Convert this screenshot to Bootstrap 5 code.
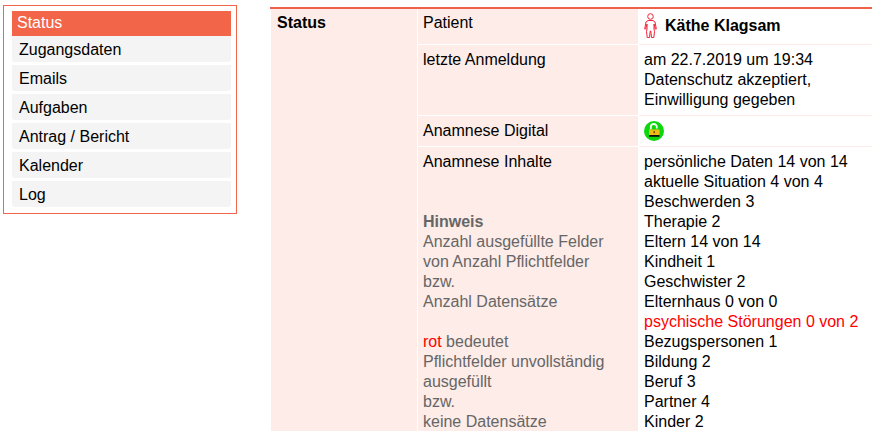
<!DOCTYPE html>
<html lang="de">
<head>
  <meta charset="UTF-8">
  <title>Status</title>
  <link href="https://cdn.jsdelivr.net/npm/bootstrap@5.3.3/dist/css/bootstrap.min.css" rel="stylesheet">
  <style>
    body { font-family: "Liberation Sans", Arial, sans-serif; font-size: 16px; line-height: 20px; color: #000; overflow-x: hidden; }
    .page-wrap { padding-top: 5px; padding-left: 3px; }
    .side-box { width: 234px; height: 209px; border: 1px solid #f26548; padding: 5px 5px 0 8px; flex-shrink: 0; }
    .side-link { display: block; height: 26px; margin-bottom: 3px; padding: 4px 7px 2px; background: #f4f4f4; color: #000; text-decoration: none; border-radius: 0 0 3px 3px; }
    .side-link.on { height: 25px; margin-bottom: 0; padding: 2px 5px; background: #f26548; color: #fff; border-radius: 0; }
    .main-box { margin-left: 33px; width: 602px; flex-shrink: 0; padding-top: 2px; }
    .stat-table { --bs-table-bg: transparent; --bs-table-color: #000; --bs-table-border-color: #fdece8; margin: 0; border-top: 2px solid #ee6148; table-layout: fixed; width: 602px; }
    .stat-table td { padding: 5px 6px; font-size: 16px; line-height: 20px; }
    .stat-table .top-row td { padding: 4px 6px 6px; }
    .stat-table td.tint { --bs-table-bg: #fdece8; }
    .stat-table td.lbl, .stat-table .top-row td.lbl { padding-left: 5px; border-bottom-color: #fff; border-left: 1px solid #fff; border-right: 1px solid #fff; }
    .stat-table td.val, .stat-table .top-row td.val { padding-left: 5px; }
    .stat-table .top-row td.head { padding-left: 6px; border-bottom: 0; border-left: 1px solid #fff; font-weight: 700; }
    .patient-name { font-weight: 700; }
    .hint-text { color: #666; }
    .txt-red { color: #f00; }
  </style>
</head>
<body>
  <div class="page-wrap d-flex align-items-start">
    <!-- Menu -->
    <nav class="side-box">
      <a class="side-link on" href="#">Status</a>
      <a class="side-link" href="#">Zugangsdaten</a>
      <a class="side-link" href="#">Emails</a>
      <a class="side-link" href="#">Aufgaben</a>
      <a class="side-link" href="#">Antrag / Bericht</a>
      <a class="side-link" href="#">Kalender</a>
      <a class="side-link" href="#">Log</a>
    </nav>

    <!-- Status -->
    <div class="main-box">
      <table class="table stat-table">
        <colgroup><col style="width:147px"><col style="width:221px"><col></colgroup>
        <tr class="top-row">
          <td class="tint head" rowspan="4">Status</td>
          <td class="tint lbl">Patient</td>
          <td class="val">
            <div class="d-flex align-items-center gap-2">
              <svg class="d-block" width="13" height="25" viewBox="0 0 13 25" fill="none" stroke="#f0243a" stroke-width="1">
                <circle cx="6.500" cy="3.500" r="2.800"/>
                <path d="M4 7.500h5l2 1.500 1.300 7h-1L10 11v5l.5 2.500-.7 6H7.500L6.800 18h-.6L5.500 24.500H3.200l-.7-6L3 16v-5l-1.300 5h-1L2 9z"/>
              </svg>
              <span class="patient-name">Käthe Klagsam</span>
            </div>
          </td>
        </tr>
        <tr>
          <td class="tint lbl">letzte Anmeldung</td>
          <td class="val">am 22.7.2019 um 19:34<br>Datenschutz akzeptiert,<br>Einwilligung gegeben</td>
        </tr>
        <tr>
          <td class="tint lbl">Anamnese Digital</td>
          <td class="val">
            <svg class="d-block" width="20" height="20" viewBox="0 0 20 20">
              <circle cx="10" cy="10" r="10" fill="#0cd60c"/>
              <path d="M6.800 8.500V6a3 3 0 0 1 6 0V7.500" fill="none" stroke="#f2fff0" stroke-width="1.800"/>
              <rect x="5" y="8.500" width="10.500" height="5.500" fill="#eebc14"/>
              <rect x="5" y="14" width="10.500" height="1.800" fill="#111"/>
              <rect x="9.500" y="10" width="1.400" height="2.200" fill="#6b5000"/>
            </svg>
          </td>
        </tr>
        <tr>
          <td class="tint lbl">
            Anamnese Inhalte<br><br><br>
            <span class="hint-text">
              <b>Hinweis</b><br>
              Anzahl ausgefüllte Felder<br>
              von Anzahl Pflichtfelder<br>
              bzw.<br>
              Anzahl Datensätze<br><br>
              <span class="txt-red">rot</span> bedeutet<br>
              Pflichtfelder unvollständig<br>
              ausgefüllt<br>
              bzw.<br>
              keine Datensätze
            </span>
          </td>
          <td class="val">
            persönliche Daten 14 von 14<br>
            aktuelle Situation 4 von 4<br>
            Beschwerden 3<br>
            Therapie 2<br>
            Eltern 14 von 14<br>
            Kindheit 1<br>
            Geschwister 2<br>
            Elternhaus 0 von 0<br>
            <span class="txt-red">psychische Störungen 0 von 2</span><br>
            Bezugspersonen 1<br>
            Bildung 2<br>
            Beruf 3<br>
            Partner 4<br>
            Kinder 2
          </td>
        </tr>
      </table>
    </div>
  </div>
  <script src="https://cdn.jsdelivr.net/npm/bootstrap@5.3.3/dist/js/bootstrap.bundle.min.js"></script>
</body>
</html>
